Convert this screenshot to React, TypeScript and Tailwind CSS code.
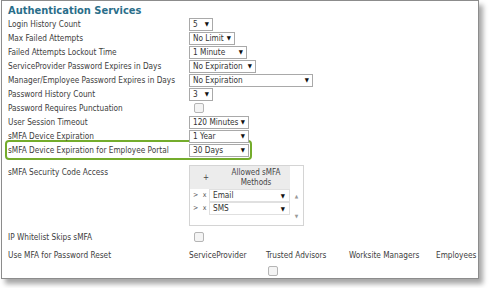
import React from 'react';

const font = { fontFamily: '"DejaVu Sans", Verdana, sans-serif', fontStretch: 'condensed' as const };

function Select({ value, width }: { value: string; width: string }) {
  return (
    <div
      className={`flex h-[13px] items-center justify-between whitespace-nowrap border border-[#a9a9a9] bg-white pl-[3px] pr-[3px] text-[8.2px] leading-none text-[#333] ${width}`}
    >
      <span>{value}</span>
      <span className="text-[6px] text-[#111]">▼</span>
    </div>
  );
}

function Checkbox() {
  return <div className="ml-[5px] h-[10px] w-[10px] rounded-[2px] border border-[#b5b5b5] bg-[#f4f4f4]" />;
}

type Row = { label: string; control: React.ReactNode };

const rows: Row[] = [
  { label: 'Login History Count', control: <Select value="5" width="w-[24px]" /> },
  { label: 'Max Failed Attempts', control: <Select value="No Limit" width="w-[46px]" /> },
  { label: 'Failed Attempts Lockout Time', control: <Select value="1 Minute" width="w-[58px]" /> },
  { label: 'ServiceProvider Password Expires in Days', control: <Select value="No Expiration" width="w-[67px]" /> },
  { label: 'Manager/Employee Password Expires in Days', control: <Select value="No Expiration" width="w-[124px]" /> },
  { label: 'Password History Count', control: <Select value="3" width="w-[24px]" /> },
  { label: 'Password Requires Punctuation', control: <Checkbox /> },
  { label: 'User Session Timeout', control: <Select value="120 Minutes" width="w-[60px]" /> },
  { label: 'sMFA Device Expiration', control: <Select value="1 Year" width="w-[60px]" /> },
];

function FieldRow({ label, control }: Row) {
  return (
    <div className="flex h-[14px] items-center">
      <div className="w-[181px] whitespace-nowrap text-[8.2px] leading-none text-[#3d3d3d]">{label}</div>
      {control}
    </div>
  );
}

function MethodsTable() {
  return (
    <div className="flex h-[61px] w-[115px] border border-[#d4d4d4] bg-white">
      <div className="w-[100px]">
        <div className="flex h-[23px] items-center bg-[#ececec] text-[8px] leading-[10px] text-[#444]">
          <span className="w-[32px] text-center">+</span>
          <span className="flex-1 text-center">Allowed sMFA<br />Methods</span>
        </div>
        {['Email', 'SMS'].map((m) => (
          <div key={m} className="flex h-[13px] items-center text-[8px] text-[#555]">
            <span className="w-[10px] pl-[3px] text-[7px]">&gt;</span>
            <span className="w-[9px] text-center text-[7px]">x</span>
            <div className="flex h-[13px] flex-1 items-center justify-between border border-[#e0e0e0] bg-white pl-[3px] pr-[4px] text-[8.2px] text-[#333]">
              <span>{m}</span>
              <span className="text-[6px] text-[#111]">▼</span>
            </div>
          </div>
        ))}
      </div>
      <div className="flex flex-1 flex-col items-center justify-between pb-[5px] pt-[27px] text-[5px] text-[#999]">
        <span>▲</span>
        <span>▼</span>
      </div>
    </div>
  );
}

export default function App() {
  return (
    <div className="h-[288px] w-[489px] bg-white" style={font}>
      <div className="ml-[1px] h-[279px] w-[478px] border border-[#8c8c8c] bg-white pl-[6px] shadow-[4px_5px_5px_rgba(0,0,0,0.35)]">
        <div className="flex h-[16px] items-end whitespace-nowrap pb-[1px] text-[11px] font-bold leading-none text-[#2a6e8a]">
          Authentication Services
        </div>
        {rows.map((r) => (
          <FieldRow key={r.label} {...r} />
        ))}
        <div className="-ml-[3px] mt-[-3px] flex h-[20px] w-[247px] items-center rounded-[4px] border-2 border-[#74ac2c] pl-[1px]">
          <div className="w-[181px] whitespace-nowrap text-[8.2px] leading-none text-[#3d3d3d]">sMFA Device Expiration for Employee Portal</div>
          <Select value="30 Days" width="w-[60px]" />
        </div>
        <div className="mt-[5px] flex">
          <div className="w-[181px] whitespace-nowrap pt-[3px] text-[8.2px] leading-none text-[#3d3d3d]">sMFA Security Code Access</div>
          <MethodsTable />
        </div>
        <div className="mt-[4px] flex h-[14px] items-center">
          <div className="w-[181px] whitespace-nowrap text-[8.2px] leading-none text-[#3d3d3d]">IP Whitelist Skips sMFA</div>
          <Checkbox />
        </div>
        <div className="mt-[5px] flex h-[12px] items-center whitespace-nowrap text-[8.2px] leading-none text-[#3d3d3d]">
          <div className="w-[181px]">Use MFA for Password Reset</div>
          <div className="w-[77px]">ServiceProvider</div>
          <div className="w-[83px]">Trusted Advisors</div>
          <div className="w-[87px]">Worksite Managers</div>
          <div>Employees</div>
        </div>
        <div className="mt-[5px] flex">
          <div className="w-[255px]" />
          <Checkbox />
        </div>
      </div>
    </div>
  );
}
